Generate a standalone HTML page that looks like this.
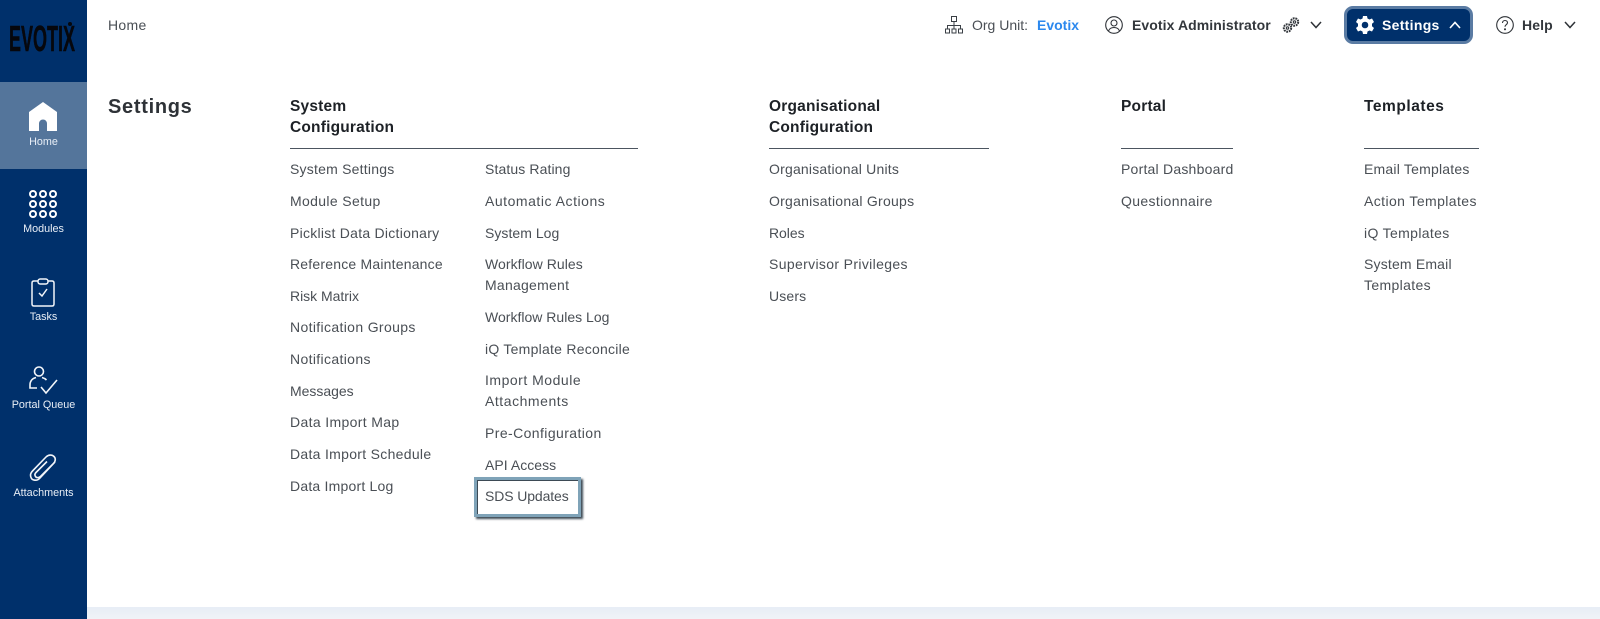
<!DOCTYPE html>
<html><head><meta charset="utf-8"><style>
html,body{margin:0;padding:0;width:1600px;height:619px;overflow:hidden;background:#fff;font-family:"Liberation Sans",sans-serif}
.a{position:absolute;white-space:nowrap}
.t{position:absolute;white-space:nowrap;font-size:14px;line-height:22px;height:22px;color:#4a4f55;letter-spacing:.35px}
.h{position:absolute;white-space:nowrap;font-size:15.5px;line-height:22px;font-weight:bold;color:#1d2126;letter-spacing:.2px}
.l{position:absolute;height:1px;background:#4c5560;top:148px}
.s{position:absolute;left:0;width:87px;text-align:center;color:#e8eef6;font-size:10.800px;line-height:14px;white-space:nowrap}
svg{position:absolute;overflow:visible}
</style></head><body>
<div class="a" style="left:0;top:0;width:87px;height:619px;background:#00306b"></div>
<div class="a" style="left:0;top:82px;width:87px;height:87px;background:#54759b"></div>
<div class="a" style="left:87px;top:607px;width:1513px;height:12px;background:linear-gradient(#e7edf6,#f0f3f7)"></div>

<div class="a" style="left:9px;top:24px;font-family:'Liberation Sans',sans-serif;font-weight:bold;font-size:36px;line-height:30px;color:#06070c;-webkit-text-stroke:.5px #06070c;transform-origin:0 0;transform:scaleX(.5)">EVOTIX</div>
<div class="a" style="left:68px;top:22px;width:4px;height:4px;border-radius:50%;background:#06070c"></div>

<svg style="left:29px;top:102px" width="28" height="29" viewBox="0 0 28 29"><path d="M14 0L28 10V29H18V21.500A4 4 0 0 0 10 21.500V29H0V10Z" fill="#fff"/></svg>
<div class="s" style="top:135px">Home</div>
<svg style="left:29px;top:190px" width="29" height="29" viewBox="0 0 29 29" fill="none" stroke="#fff" stroke-width="2"><circle cx="4" cy="4" r="3"/><circle cx="14" cy="4" r="3"/><circle cx="24" cy="4" r="3"/><circle cx="4" cy="14" r="3"/><circle cx="14" cy="14" r="3"/><circle cx="24" cy="14" r="3"/><circle cx="4" cy="24" r="3"/><circle cx="14" cy="24" r="3"/><circle cx="24" cy="24" r="3"/></svg>
<div class="s" style="top:222px">Modules</div>
<svg style="left:31px;top:278px" width="24" height="29" viewBox="0 0 24 29" fill="none" stroke="#f2f5f9" stroke-width="1.500"><path d="M7 3H3Q1 3 1 5V26Q1 28 3 28H21Q23 28 23 26V5Q23 3 21 3H17"/><rect x="7" y="1" width="10" height="5" rx="2.200"/><path d="M8 15L11 18L16 11"/></svg>
<div class="s" style="top:310px">Tasks</div>
<svg style="left:29px;top:366px" width="29" height="29" viewBox="0 0 29 29" fill="none" stroke="#f2f5f9" stroke-width="1.600"><circle cx="10" cy="5.500" r="4.500"/><path d="M7 11.500C3 12.500 1 15 1 19V22H8"/><path d="M13 11.500C15 12 16 12.500 17.500 14"/><path d="M12 21L17 27L28 14"/></svg>
<div class="s" style="top:398px">Portal Queue</div>
<svg style="left:29px;top:454px" width="28" height="28" viewBox="0 0 28 28" fill="none" stroke="#f2f5f9" stroke-width="1.600"><path d="M26 8L11 24C8 27.500 3 26.500 2 23.500C1 21 1.500 19 3.500 17L17 3C19.500 .5 23 .5 25 2.500C27 4.500 26.500 7.500 24.500 9.500L11.500 22.500C10 24 7.500 24 6.500 22.500C5.500 21 6 19.500 7 18.500L18 7.500"/></svg>
<div class="s" style="top:486px">Attachments</div>

<div class="t" style="left:108px;top:14px;letter-spacing:.3px">Home</div>
<div class="a" style="left:108px;top:94px;font-size:20px;line-height:26px;font-weight:bold;color:#2e3237;letter-spacing:.7px">Settings</div>

<svg style="left:945px;top:16px" width="18" height="18" viewBox="0 0 18 18" fill="none" stroke="#3a3f45" stroke-width="1"><rect x="6.500" y=".5" width="5" height="5"/><path d="M9 5.500V9M2.500 13V9.500H15.500V13M9 9.500V13"/><rect x=".5" y="13" width="4" height="4"/><rect x="7" y="13" width="4" height="4"/><rect x="13.500" y="13" width="4" height="4"/></svg>
<div class="t" style="left:972px;top:14px;letter-spacing:0">Org Unit:</div>
<div class="t" style="left:1037px;top:14px;color:#2b88ee;font-weight:bold;letter-spacing:0">Evotix</div>
<svg style="left:1105px;top:16px" width="18" height="18" viewBox="0 0 18 18" fill="none" stroke="#2e3237" stroke-width="1.100"><circle cx="9" cy="9" r="8.300"/><circle cx="9" cy="7" r="3"/><path d="M3.500 15C4.500 12 6.500 11.500 9 11.500C11.500 11.500 13.500 12 14.500 15"/></svg>
<div class="t" style="left:1132px;top:14px;font-weight:bold;color:#33373c;letter-spacing:.08px">Evotix Administrator</div>
<svg style="left:1282px;top:16px" width="18" height="18" viewBox="0 0 18 18" fill="none" stroke="#33373c" stroke-width="1.100"><circle cx="5.500" cy="12" r="3.700" stroke-dasharray="1.800 .8" stroke-width="2"/><circle cx="5.500" cy="12" r="1.200"/><circle cx="12.500" cy="6" r="3.700" stroke-dasharray="1.800 .8" stroke-width="2"/><circle cx="12.500" cy="6" r="1.200"/></svg>
<svg style="left:1310px;top:21px" width="12" height="8" viewBox="0 0 12 8" fill="none" stroke="#2e3237" stroke-width="1.500"><path d="M1 1L6 6.500L11 1"/></svg>

<div class="a" style="left:1344px;top:6px;width:129px;height:38px;box-sizing:border-box;background:#00306b;border:3px solid #5a7ba3;border-radius:9px"></div>
<svg style="left:1356px;top:16px" width="18" height="18" viewBox="0 0 18 18"><path fill="#fff" fill-rule="evenodd" d="M7 0H11L11.500 2.500L13.500 3.500L16 2.500L18 6L16 7.800V10.200L18 12L16 15.500L13.500 14.500L11.500 15.500L11 18H7L6.500 15.500L4.500 14.500L2 15.500L0 12L2 10.200V7.800L0 6L2 2.500L4.500 3.500L6.500 2.500ZM9 5.700A3.300 3.300 0 1 0 9 12.300A3.300 3.300 0 1 0 9 5.700Z"/></svg>
<div class="t" style="left:1382px;top:14px;color:#fff;font-weight:bold;letter-spacing:.3px">Settings</div>
<svg style="left:1449px;top:21px" width="12" height="8" viewBox="0 0 12 8" fill="none" stroke="#fff" stroke-width="1.600"><path d="M1 7L6 1.500L11 7"/></svg>

<svg style="left:1496px;top:16px" width="18" height="18" viewBox="0 0 18 18" fill="none" stroke="#2e3237" stroke-width="1.100"><circle cx="9" cy="9" r="8.300"/><path d="M6.500 7C6.500 5.500 7.700 4.500 9 4.500C10.500 4.500 11.500 5.500 11.500 6.800C11.500 8.500 9 8.700 9 10.800"/><circle cx="9" cy="13.300" r=".5" fill="#2e3237"/></svg>
<div class="t" style="left:1522px;top:14px;font-weight:bold;color:#33373c;letter-spacing:.1px">Help</div>
<svg style="left:1564px;top:21px" width="12" height="8" viewBox="0 0 12 8" fill="none" stroke="#2e3237" stroke-width="1.500"><path d="M1 1L6 6.500L11 1"/></svg>

<div class="h" style="left:290px;top:96px">System</div>
<div class="h" style="left:290px;top:117px">Configuration</div>
<div class="h" style="left:769px;top:96px">Organisational</div>
<div class="h" style="left:769px;top:117px">Configuration</div>
<div class="h" style="left:1121px;top:96px">Portal</div>
<div class="h" style="left:1364px;top:96px;letter-spacing:.55px">Templates</div>
<div class="l" style="left:290px;width:348px"></div>
<div class="l" style="left:769px;width:220px"></div>
<div class="l" style="left:1121px;width:112px"></div>
<div class="l" style="left:1364px;width:115px"></div>

<div class="t" style="left:290px;top:158px;letter-spacing:.22px">System Settings</div>
<div class="t" style="left:290px;top:190px">Module Setup</div>
<div class="t" style="left:290px;top:222px;letter-spacing:.26px">Picklist Data Dictionary</div>
<div class="t" style="left:290px;top:253px;letter-spacing:.2px">Reference Maintenance</div>
<div class="t" style="left:290px;top:285px;letter-spacing:-.02px">Risk Matrix</div>
<div class="t" style="left:290px;top:316px">Notification Groups</div>
<div class="t" style="left:290px;top:348px">Notifications</div>
<div class="t" style="left:290px;top:380px;letter-spacing:-.03px">Messages</div>
<div class="t" style="left:290px;top:411px">Data Import Map</div>
<div class="t" style="left:290px;top:443px;letter-spacing:.3px">Data Import Schedule</div>
<div class="t" style="left:290px;top:475px;letter-spacing:.21px">Data Import Log</div>

<div class="t" style="left:485px;top:158px;letter-spacing:.11px">Status Rating</div>
<div class="t" style="left:485px;top:190px;letter-spacing:.53px">Automatic Actions</div>
<div class="t" style="left:485px;top:222px;letter-spacing:.04px">System Log</div>
<div class="t" style="left:485px;top:253px;letter-spacing:.06px">Workflow Rules</div>
<div class="t" style="left:485px;top:274px;letter-spacing:.25px">Management</div>
<div class="t" style="left:485px;top:306px;letter-spacing:.01px">Workflow Rules Log</div>
<div class="t" style="left:485px;top:338px;letter-spacing:.25px">iQ Template Reconcile</div>
<div class="t" style="left:485px;top:369px;letter-spacing:.51px">Import Module</div>
<div class="t" style="left:485px;top:390px;letter-spacing:.54px">Attachments</div>
<div class="t" style="left:485px;top:422px;letter-spacing:.41px">Pre-Configuration</div>
<div class="t" style="left:485px;top:454px;letter-spacing:.04px">API Access</div>
<div class="a" style="left:474px;top:477px;width:107px;height:40px;box-sizing:border-box;border:3px solid #7fa3b8;background:#fff;box-shadow:inset 1px 1px 0 #3d4a55,2px 2px 2px #3d4a55"></div>
<div class="t" style="left:485px;top:485px;letter-spacing:-.11px">SDS Updates</div>

<div class="t" style="left:769px;top:158px;letter-spacing:.2px">Organisational Units</div>
<div class="t" style="left:769px;top:190px;letter-spacing:.25px">Organisational Groups</div>
<div class="t" style="left:769px;top:222px;letter-spacing:-.05px">Roles</div>
<div class="t" style="left:769px;top:253px">Supervisor Privileges</div>
<div class="t" style="left:769px;top:285px;letter-spacing:.15px">Users</div>

<div class="t" style="left:1121px;top:158px;letter-spacing:.22px">Portal Dashboard</div>
<div class="t" style="left:1121px;top:190px">Questionnaire</div>

<div class="t" style="left:1364px;top:158px;letter-spacing:.21px">Email Templates</div>
<div class="t" style="left:1364px;top:190px;letter-spacing:.41px">Action Templates</div>
<div class="t" style="left:1364px;top:222px">iQ Templates</div>
<div class="t" style="left:1364px;top:253px;letter-spacing:.18px">System Email</div>
<div class="t" style="left:1364px;top:274px">Templates</div>
</body></html>
